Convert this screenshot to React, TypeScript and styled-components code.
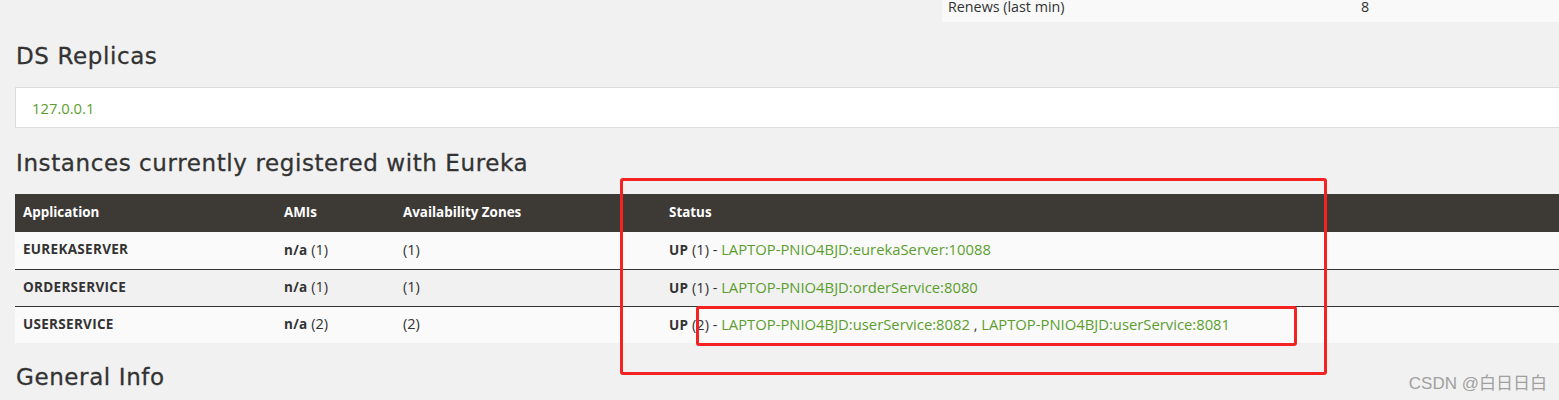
import React from "react";
import styled, { createGlobalStyle } from "styled-components";

const Global = createGlobalStyle`
  html, body { margin: 0; padding: 0; background: #f1f1f1; overflow: hidden; }
  body { width: 1559px; height: 400px; font-family: "Open Sans", "Noto Sans", sans-serif; color: #333; }
`;

const Page = styled.div`
  position: relative;
  width: 1559px;
  height: 400px;
  overflow: hidden;
  padding-left: 15px;
  box-sizing: border-box;
`;

const TopGrid = styled.div`
  display: grid;
  grid-template-columns: 927px 660px;
  height: 22px;
  overflow: hidden;
`;

const MiniTable = styled.div`
  background: #f9f9f9;
  display: grid;
  grid-template-columns: 413px 1fr;
  align-items: center;
  padding-left: 6px;
  font-size: 14.3px;
  line-height: 16px;
  color: #333;
  height: 30px;
  margin-top: -8px;
`;

const Heading = styled.h2<{ $top: number; $bottom: number }>`
  margin: ${(p) => p.$top}px 0 ${(p) => p.$bottom}px 1px;
  font-family: "DejaVu Sans", "Noto Sans", sans-serif;
  font-weight: 500;
  font-size: 23px;
  line-height: 26px;
  color: #333;
  letter-spacing: 0.6px;
  -webkit-text-stroke: 0.3px #333;
`;

const ReplicaBox = styled.div`
  width: 1580px;
  height: 39px;
  background: #fff;
  border: 1px solid #ddd;
  display: flex;
  align-items: center;
  padding-left: 16px;
  box-sizing: content-box;
`;

const GreenLink = styled.a`
  color: #5a9e2e;
  font-size: 14.8px;
  text-decoration: none;
`;

const Table = styled.div`
  width: 1580px;
`;

const cols = "261px 119px 266px 1fr";

const HeadRow = styled.div`
  display: grid;
  grid-template-columns: ${cols};
  height: 38px;
  align-items: center;
  background: #3d3a35;
  color: #fff;
  font-weight: 700;
  font-size: 13.4px;
  padding-left: 8px;
  padding-bottom: 3px;
  box-sizing: border-box;
`;

const Row = styled.div<{ $alt: boolean; $line: boolean }>`
  display: grid;
  grid-template-columns: ${cols};
  height: 37px;
  align-items: center;
  background: ${(p) => (p.$alt ? "#f1f1f1" : "#fafafa")};
  border-top: ${(p) => (p.$line ? "1px solid #333" : "none")};
  box-sizing: border-box;
  font-size: 14.5px;
  color: #333;
  padding-left: 8px;
  padding-bottom: 3px;
`;

const Bold = styled.b`
  font-weight: 700;
  font-size: 13.5px;
  letter-spacing: 0.3px;
`;

const RedBox = styled.div<{ $x: number; $y: number; $w: number; $h: number }>`
  position: absolute;
  left: ${(p) => p.$x}px;
  top: ${(p) => p.$y}px;
  width: ${(p) => p.$w}px;
  height: ${(p) => p.$h}px;
  border: 3px solid #f52222;
  border-radius: 3px;
  box-sizing: border-box;
  pointer-events: none;
`;

const Watermark = styled.div`
  position: absolute;
  right: 12px;
  bottom: 6px;
  font-family: "Liberation Sans", "Noto Sans CJK SC", sans-serif;
  font-size: 17px;
  color: #a0a0a0;
`;

const rows = [
  { app: "EUREKASERVER", ami: "(1)", az: "(1)", n: "(1)", links: ["LAPTOP-PNIO4BJD:eurekaServer:10088"] },
  { app: "ORDERSERVICE", ami: "(1)", az: "(1)", n: "(1)", links: ["LAPTOP-PNIO4BJD:orderService:8080"] },
  {
    app: "USERSERVICE",
    ami: "(2)",
    az: "(2)",
    n: "(2)",
    links: ["LAPTOP-PNIO4BJD:userService:8082", "LAPTOP-PNIO4BJD:userService:8081"],
  },
];

export default function App() {
  return (
    <>
      <Global />
      <Page>
        <TopGrid>
          <div />
          <MiniTable>
            <span>Renews (last min)</span>
            <span>8</span>
          </MiniTable>
        </TopGrid>
        <Heading $top={21} $bottom={18}>DS Replicas</Heading>
        <ReplicaBox>
          <GreenLink href="#">127.0.0.1</GreenLink>
        </ReplicaBox>
        <Heading $top={22} $bottom={18}>Instances currently registered with Eureka</Heading>
        <Table>
          <HeadRow>
            <span>Application</span>
            <span>AMIs</span>
            <span>Availability Zones</span>
            <span>Status</span>
          </HeadRow>
          {rows.map((r, i) => (
            <Row key={r.app} $alt={i % 2 === 1} $line={i > 0}>
              <Bold>{r.app}</Bold>
              <span>
                <Bold>n/a</Bold> {r.ami}
              </span>
              <span>{r.az}</span>
              <span>
                <Bold>UP</Bold> {r.n} -{" "}
                {r.links.map((l, j) => (
                  <React.Fragment key={l}>
                    {j > 0 && " , "}
                    <GreenLink href="#">{l}</GreenLink>
                  </React.Fragment>
                ))}
              </span>
            </Row>
          ))}
        </Table>
        <Heading $top={21} $bottom={0}>General Info</Heading>
        <RedBox $x={620} $y={178} $w={707} $h={197} />
        <RedBox $x={696} $y={306} $w={601} $h={40} />
        <Watermark>CSDN @白日日白</Watermark>
      </Page>
    </>
  );
}
